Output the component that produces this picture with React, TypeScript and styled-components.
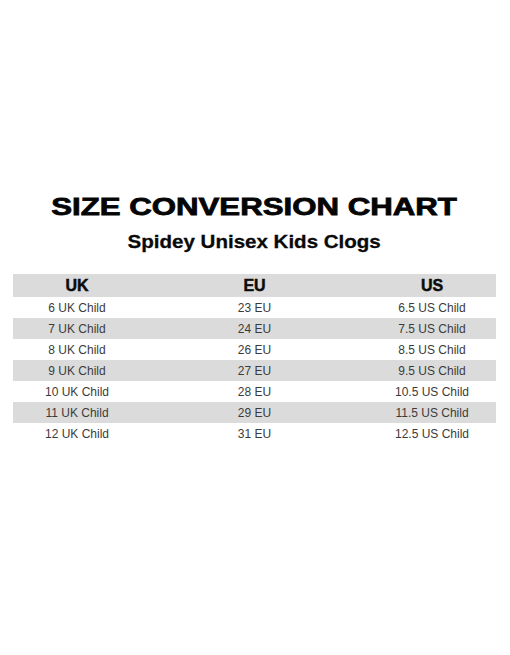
import React from 'react';
import styled, { createGlobalStyle } from 'styled-components';

interface SizeRow {
  uk: string;
  eu: string;
  us: string;
}

const sizes: SizeRow[] = [
  { uk: '6 UK Child', eu: '23 EU', us: '6.5 US Child' },
  { uk: '7 UK Child', eu: '24 EU', us: '7.5 US Child' },
  { uk: '8 UK Child', eu: '26 EU', us: '8.5 US Child' },
  { uk: '9 UK Child', eu: '27 EU', us: '9.5 US Child' },
  { uk: '10 UK Child', eu: '28 EU', us: '10.5 US Child' },
  { uk: '11 UK Child', eu: '29 EU', us: '11.5 US Child' },
  { uk: '12 UK Child', eu: '31 EU', us: '12.5 US Child' },
];

const GlobalStyle = createGlobalStyle`
  html, body {
    margin: 0;
    padding: 0;
    background: #ffffff;
  }

  body {
    font-family: "Liberation Sans", Arial, sans-serif;
  }
`;

const Page = styled.div`
  width: 510px;
  height: 655px;
  box-sizing: border-box;
  padding: 193px 14px 0 13px;
  display: flex;
  flex-direction: column;
  align-items: stretch;
  overflow: hidden;
`;

const Title = styled.h1`
  margin: 0 auto;
  width: fit-content;
  font-size: 24px;
  line-height: 28px;
  font-weight: 700;
  color: #050505;
  text-align: center;
  transform: scaleX(1.3);
  -webkit-text-stroke: 0.8px #050505;
  white-space: nowrap;
`;

const Subtitle = styled.h2`
  margin: 10px auto 0;
  width: fit-content;
  font-size: 19px;
  line-height: 22px;
  font-weight: 700;
  color: #0a0a0a;
  text-align: center;
  transform: scaleX(1.08);
  -webkit-text-stroke: 0.3px #0a0a0a;
  white-space: nowrap;
`;

const Chart = styled.div`
  margin-top: 21px;
  display: flex;
  flex-direction: column;
`;

const Row = styled.div<{ $shaded?: boolean; $head?: boolean }>`
  display: grid;
  grid-template-columns: 128px 1fr 128px;
  align-items: center;
  height: ${({ $head }) => ($head ? '23px' : '21px')};
  background: ${({ $shaded }) => ($shaded ? '#dbdbdb' : '#ffffff')};
`;

const HeadCell = styled.div`
  text-align: center;
  font-size: 16px;
  font-weight: 700;
  color: #0c0c0c;
  padding-top: 1px;
  -webkit-text-stroke: 0.5px #0c0c0c;
`;

const Cell = styled.div`
  text-align: center;
  font-size: 12px;
  color: #3b3b3b;
`;

const App: React.FC = () => {
  return (
    <>
      <GlobalStyle />
      <Page>
        <Title>SIZE CONVERSION CHART</Title>
        <Subtitle>Spidey Unisex Kids Clogs</Subtitle>
        <Chart>
          <Row $head $shaded>
            <HeadCell>UK</HeadCell>
            <HeadCell>EU</HeadCell>
            <HeadCell>US</HeadCell>
          </Row>
          {sizes.map((s, i) => (
            <Row key={s.uk} $shaded={i % 2 === 1}>
              <Cell>{s.uk}</Cell>
              <Cell>{s.eu}</Cell>
              <Cell>{s.us}</Cell>
            </Row>
          ))}
        </Chart>
      </Page>
    </>
  );
};

export default App;
